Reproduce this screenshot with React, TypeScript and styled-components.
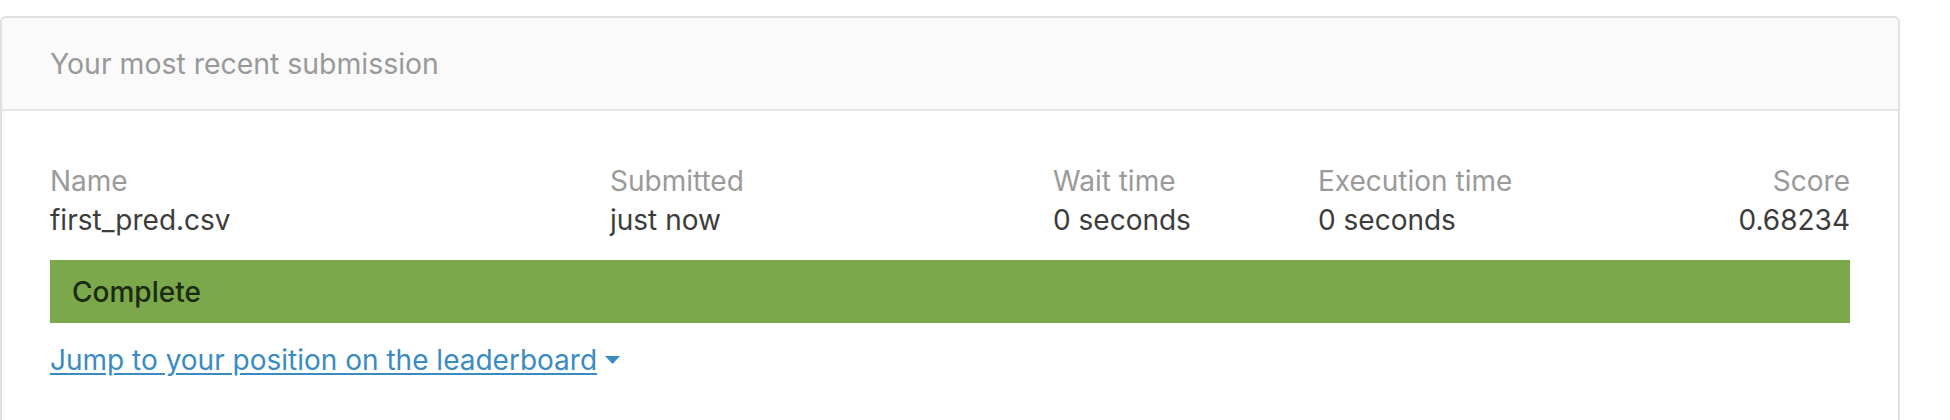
import React from "react";
import styled, { createGlobalStyle } from "styled-components";

const GlobalStyle = createGlobalStyle`
  html, body {
    margin: 0;
    padding: 0;
    background: #ffffff;
  }
  body {
    font-family: Inter, "Liberation Sans", Arial, sans-serif;
  }
`;

const Page = styled.div`
  padding-top: 16px;
  width: 1900px;
`;

const Card = styled.section`
  border: 2px solid #e0e0e0;
  border-radius: 6px;
  background: #ffffff;
  overflow: hidden;
`;

const CardHeader = styled.header`
  height: 91px;
  display: flex;
  align-items: center;
  padding: 0 48px;
  background: #fafafa;
  border-bottom: 2px solid #e6e6e6;
`;

const HeaderTitle = styled.h2`
  margin: 0;
  font-size: 28.4px;
  font-weight: 400;
  color: #999999;
  line-height: normal;
`;

const CardBody = styled.div`
  padding: 51px 48px 80px;
`;

const Stats = styled.div`
  display: grid;
  grid-template-columns: 560px 443px 265px 1fr auto;
`;

const Stat = styled.div<{ $align?: "left" | "right" }>`
  display: flex;
  flex-direction: column;
  text-align: ${(p) => p.$align ?? "left"};
`;

const Label = styled.span`
  font-size: 28px;
  line-height: 38px;
  color: #9a9a9a;
`;

const Value = styled.span`
  font-size: 28px;
  line-height: 40px;
  color: #3c3c3c;
`;

const StatusBar = styled.div`
  margin-top: 20px;
  height: 63px;
  background: #7aa84a;
  display: flex;
  align-items: center;
  padding: 0 22px;
  font-size: 28px;
  line-height: normal;
  font-weight: 500;
  color: #1d2a12;
`;

const JumpLink = styled.a`
  display: inline-flex;
  align-items: center;
  gap: 8px;
  margin-top: 19px;
  font-size: 28px;
  line-height: 36px;
  color: #3a8bc2;
  text-decoration: underline;
  text-underline-offset: 3px;
  cursor: pointer;
`;

const Caret = styled.svg`
  width: 15px;
  height: 8px;
  fill: #3a8bc2;
`;

const stats = [
  { label: "Name", value: "first_pred.csv" },
  { label: "Submitted", value: "just now" },
  { label: "Wait time", value: "0 seconds" },
  { label: "Execution time", value: "0 seconds" },
];

export default function App() {
  return (
    <>
      <GlobalStyle />
      <Page>
        <Card>
          <CardHeader>
            <HeaderTitle>Your most recent submission</HeaderTitle>
          </CardHeader>
          <CardBody>
            <Stats>
              {stats.map((s) => (
                <Stat key={s.label}>
                  <Label>{s.label}</Label>
                  <Value>{s.value}</Value>
                </Stat>
              ))}
              <Stat $align="right">
                <Label>Score</Label>
                <Value>0.68234</Value>
              </Stat>
            </Stats>
            <StatusBar>Complete</StatusBar>
            <div>
              <JumpLink>
                Jump to your position on the leaderboard
                <Caret viewBox="0 0 15 8">
                  <path d="M0 0 L15 0 L7.5 8 Z" />
                </Caret>
              </JumpLink>
            </div>
          </CardBody>
        </Card>
      </Page>
    </>
  );
}
